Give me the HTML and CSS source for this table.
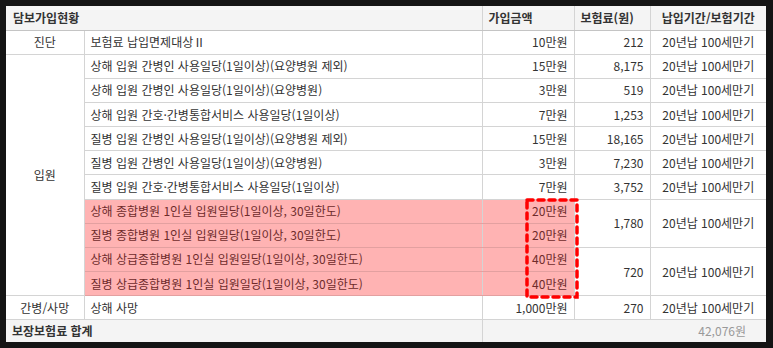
FILE: index.html
```html
<!DOCTYPE html>
<html lang="ko">
<head>
<meta charset="utf-8">
<link rel="stylesheet" href="styles.css">
</head>
<body>
<table class="cov">
  <colgroup>
    <col class="c1"><col class="c2"><col class="c3"><col class="c4"><col class="c5">
  </colgroup>
  <thead>
    <tr class="head">
      <th colspan="2" class="hl-left">담보가입현황</th>
      <th class="hl-left">가입금액</th>
      <th class="hl-left">보험료(원)</th>
      <th class="hc">납입기간/보험기간</th>
    </tr>
  </thead>
  <tbody>
    <tr>
      <td class="cat">진단</td>
      <td class="desc">보험료 납입면제대상Ⅱ</td>
      <td class="num">10만원</td>
      <td class="num">212</td>
      <td class="term">20년납 100세만기</td>
    </tr>
    <tr>
      <td class="cat" rowspan="10">입원</td>
      <td class="desc">상해 입원 간병인 사용일당(1일이상)(요양병원 제외)</td>
      <td class="num">15만원</td>
      <td class="num">8,175</td>
      <td class="term">20년납 100세만기</td>
    </tr>
    <tr>
      <td class="desc">상해 입원 간병인 사용일당(1일이상)(요양병원)</td>
      <td class="num">3만원</td>
      <td class="num">519</td>
      <td class="term">20년납 100세만기</td>
    </tr>
    <tr>
      <td class="desc">상해 입원 간호·간병통합서비스 사용일당(1일이상)</td>
      <td class="num">7만원</td>
      <td class="num">1,253</td>
      <td class="term">20년납 100세만기</td>
    </tr>
    <tr>
      <td class="desc">질병 입원 간병인 사용일당(1일이상)(요양병원 제외)</td>
      <td class="num">15만원</td>
      <td class="num">18,165</td>
      <td class="term">20년납 100세만기</td>
    </tr>
    <tr>
      <td class="desc">질병 입원 간병인 사용일당(1일이상)(요양병원)</td>
      <td class="num">3만원</td>
      <td class="num">7,230</td>
      <td class="term">20년납 100세만기</td>
    </tr>
    <tr>
      <td class="desc">질병 입원 간호·간병통합서비스 사용일당(1일이상)</td>
      <td class="num">7만원</td>
      <td class="num">3,752</td>
      <td class="term">20년납 100세만기</td>
    </tr>
    <tr class="mark">
      <td class="desc">상해 종합병원 1인실 입원일당(1일이상, 30일한도)</td>
      <td class="num boxcell">20만원<svg class="dashbox" width="56" height="104" viewBox="0 0 56 104" aria-hidden="true"><rect x="3" y="3" width="50" height="97" fill="none" stroke="#ff0000" stroke-width="3.5" stroke-linecap="round" stroke-dasharray="6 5"/></svg></td>
      <td class="num plain" rowspan="2">1,780</td>
      <td class="term plain" rowspan="2">20년납 100세만기</td>
    </tr>
    <tr class="mark">
      <td class="desc">질병 종합병원 1인실 입원일당(1일이상, 30일한도)</td>
      <td class="num">20만원</td>
    </tr>
    <tr class="mark">
      <td class="desc">상해 상급종합병원 1인실 입원일당(1일이상, 30일한도)</td>
      <td class="num">40만원</td>
      <td class="num plain" rowspan="2">720</td>
      <td class="term plain" rowspan="2">20년납 100세만기</td>
    </tr>
    <tr class="mark">
      <td class="desc">질병 상급종합병원 1인실 입원일당(1일이상, 30일한도)</td>
      <td class="num">40만원</td>
    </tr>
    <tr>
      <td class="cat">간병/사망</td>
      <td class="desc">상해 사망</td>
      <td class="num">1,000만원</td>
      <td class="num">270</td>
      <td class="term">20년납 100세만기</td>
    </tr>
  </tbody>
  <tfoot>
    <tr class="total">
      <td colspan="2" class="tlabel">보장보험료 합계</td>
      <td colspan="3" class="tval">42,076원</td>
    </tr>
  </tfoot>
</table>
</body>
</html>
```

FILE: styles.css
```css
html, body {
  margin: 0;
  padding: 0;
  background: #141414;
}
body {
  padding: 6px 7px 6px 6px;
  font-family: "Noto Sans CJK KR", "Noto Sans", sans-serif;
  font-size: 12px;
  color: #333333;
}
.cov {
  width: 760px;
  table-layout: fixed;
  border-collapse: collapse;
  background: #ffffff;
}
.c1 { width: 78px; }
.c2 { width: 398px; }
.c3 { width: 92px; }
.c4 { width: 76px; }
.c5 { width: 116px; }

.cov th, .cov td {
  height: 24.17px;
  padding: 0 6px;
  border: 1px solid #d4d4d4;
  line-height: 16px;
  white-space: nowrap;
  box-sizing: border-box;
}
.cov th { height: 24px; }
.cov tr:first-child th { border-top: none; }
.cov th:first-child, .cov td:first-child { border-left: none; }
.cov th:last-child, .cov td:last-child { border-right: none; }
.cov tfoot td { border-bottom: none; }

.head th {
  background: #f4f4f4;
  font-weight: bold;
  color: #333;
  border-bottom-color: #c4c4c4;
}
.hl-left { text-align: left; }
.head th:first-child { padding-left: 7px; }
.hc { text-align: center; }

.cat { text-align: center; }
.desc { text-align: left; }
.num { text-align: right; }
.term { text-align: center; }

.mark .desc, .mark .num:not(.plain) {
  background: #ffb3b3;
  color: #6e2b2b;
  border-bottom-color: #e3a0a0;
  border-top-color: #e3a0a0;
}
.boxcell { position: relative; }
.dashbox {
  position: absolute;
  left: 41px;
  top: -3px;
  z-index: 2;
  overflow: visible;
}

.total td {
  background: #f4f4f4;
  height: 22px;
}
.tlabel {
  font-weight: bold;
  padding-left: 7px;
}
.tval {
  text-align: right;
  color: #999999;
  padding-right: 20px !important;
}
```
